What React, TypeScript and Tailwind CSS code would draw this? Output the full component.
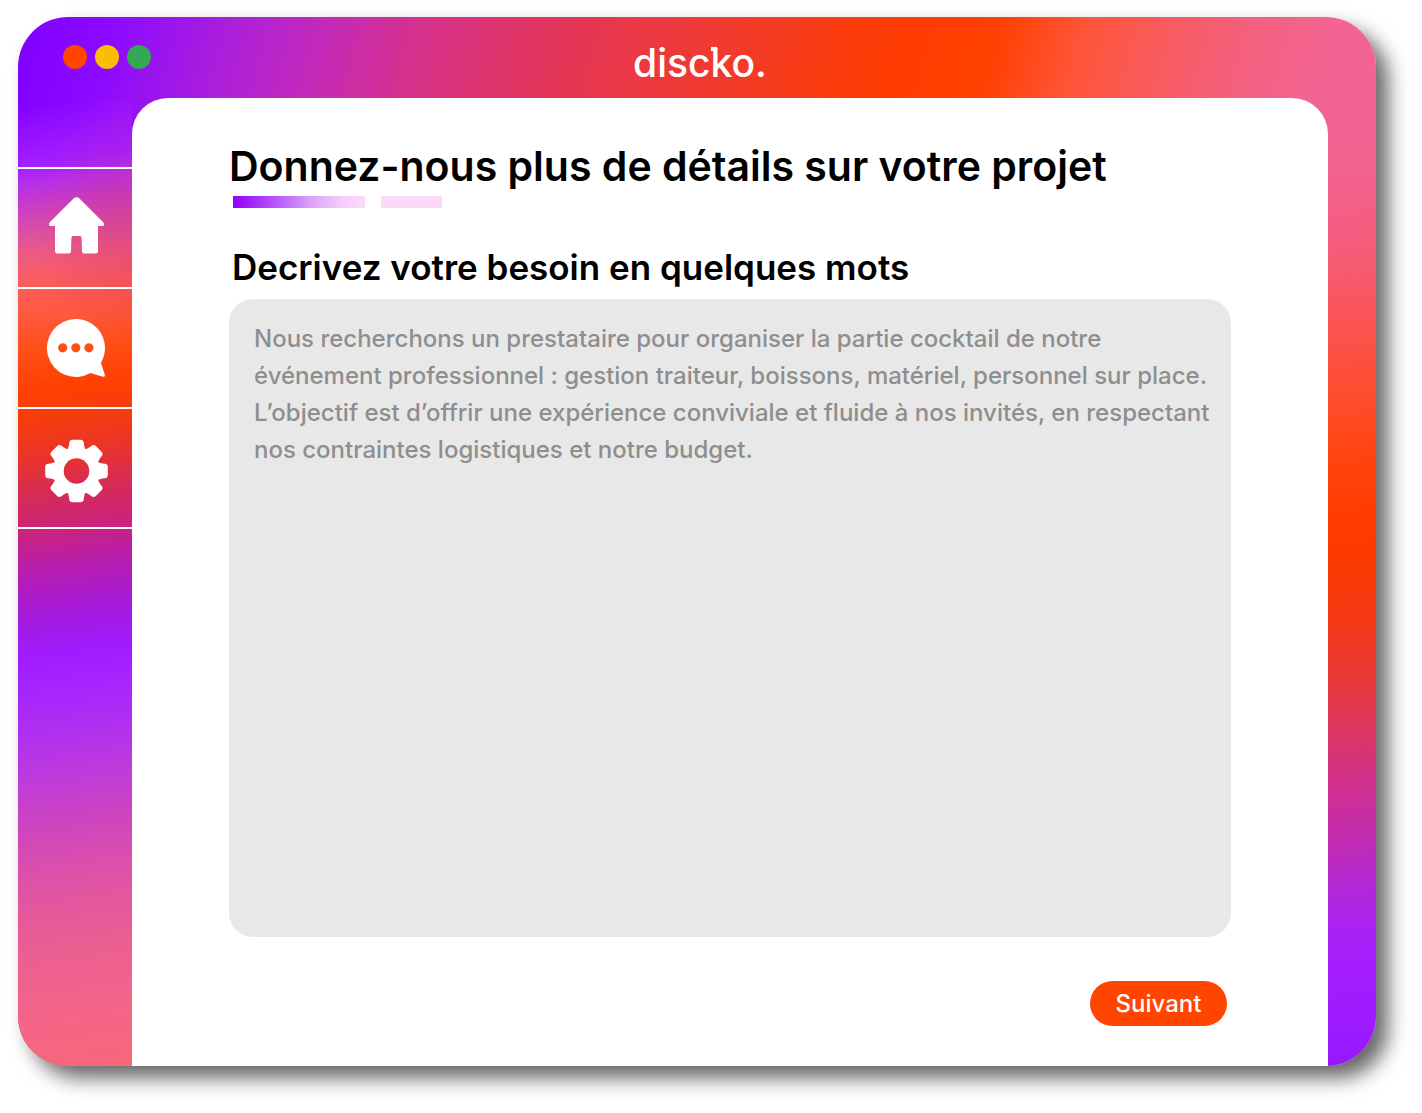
import { useState } from "react";

const DEFAULT_BRIEF =
  "Nous recherchons un prestataire pour organiser la partie cocktail de notre événement professionnel : gestion traiteur, boissons, matériel, personnel sur place. L’objectif est d’offrir une expérience conviviale et fluide à nos invités, en respectant nos contraintes logistiques et notre budget.";

const Logo = () => (
  <svg viewBox="0 0 160 60" className="h-[60px] w-40 justify-self-center" fill="white" role="img" aria-label="discko.">
    <text x="83" y="49" textAnchor="middle" fontFamily="Inter, sans-serif" fontSize="39" fontWeight="500">
      discko.
    </text>
    {/* small flag on top of the k */}
    <rect x="94" y="19" width="6" height="4" />
  </svg>
);

const HomeIcon = () => (
  <svg viewBox="0 0 55 63" className="h-[63px] w-[55px]" fill="currentColor" aria-hidden="true">
    <path d="M24.8 1.2Q27.5-.8 30.2 1.2L54 25Q55 26 55 27.500Q55 29 53 29H49V54Q49 56.500 46.500 56.500H35.500Q33 56.500 33 54L32.600 41Q32.500 39 31 39H24Q22.500 39 22.400 41L22 54Q22 56.500 19.500 56.500H8.500Q6 56.500 6 54V29H2Q0 29 0 27.500Q0 26 1 25Z" />
  </svg>
);

const ChatIcon = () => (
  <svg viewBox="0 0 58 58" className="size-[58px]" fill="currentColor" aria-hidden="true">
    <path
      fillRule="evenodd"
      d="M29 0A29 29 0 0 1 53.900 43.800L57.900 56Q58.200 58.200 56 57.800L43.500 54.100A29 29 0 1 1 29 0ZM15.700 24.200a4.600 4.600 0 1 0 0 9.200a4.600 4.600 0 1 0 0-9.200ZM28.800 24.200a4.600 4.600 0 1 0 0 9.200a4.600 4.600 0 1 0 0-9.200ZM41.900 24.200a4.600 4.600 0 1 0 0 9.200a4.600 4.600 0 1 0 0-9.200Z"
    />
  </svg>
);

const GearIcon = () => (
  <svg viewBox="-32.5 -37 64 69" className="h-[69px] w-16" fill="currentColor" aria-hidden="true">
    <mask id="gear-hole" maskUnits="userSpaceOnUse" x="-32" y="-32" width="64" height="64">
      <rect x="-32" y="-32" width="64" height="64" fill="white" />
      <circle r="12.8" fill="black" />
    </mask>
    <g mask="url(#gear-hole)">
      <circle r="23" />
      {[0, 45, 90, 135, 180, 225, 270, 315].map((angle) => (
        <path
          key={angle}
          transform={`rotate(${angle})`}
          d="M-10-20Q-7.800-23-7.500-26L-7.200-28.500Q-6.900-31.300-4-31.300H4Q6.900-31.300 7.200-28.500L7.500-26Q7.800-23 10-20Z"
        />
      ))}
    </g>
  </svg>
);

const navItems = [
  { label: "Accueil", Icon: HomeIcon },
  { label: "Messages", Icon: ChatIcon },
  { label: "Paramètres", Icon: GearIcon },
];

const App = () => {
  const [brief, setBrief] = useState(DEFAULT_BRIEF);

  return (
    <div className="flex min-h-screen bg-white pt-[17px] pr-[46px] pb-[47px] pl-[18px] font-['Inter',sans-serif]">
      {/* Window frame */}
      <div className="flex flex-1 flex-col overflow-hidden rounded-[50px] shadow-[12px_12px_20px_rgba(0,0,0,0.6)] bg-[linear-gradient(105deg,#8000ff_0%,#8c0aff_6%,#ab1fdb_13%,#c42ab8_19%,#d6318a_25%,#e03560_32%,#e9384a_37%,#f13a2c_44%,#fa3c10_50%,#ff3d00_55%,#ff4000_60%,#ff5436_65%,#fa5a55_69%,#f4607c_75%,#f26494_81%,#f2649c_100%)]">
        <header className="grid h-[81px] grid-cols-3 items-center">
          <div className="flex gap-2 pb-0.5 pl-[45px]">
            <span className="size-6 rounded-full bg-[#ff4500]" />
            <span className="size-6 rounded-full bg-[#fbbc05]" />
            <span className="size-6 rounded-full bg-[#34a853]" />
          </div>
          <Logo />
        </header>

        <div className="flex flex-1">
          {/* Sidebar */}
          <nav className="w-[114px] shrink-0 pt-[69px] text-white bg-[radial-gradient(100px_120px_at_100%_13%,rgba(200,44,130,0.35),transparent),linear-gradient(172deg,transparent_1%,#a41eff_7%,#b830e8_9%,#c83cc8_11%,#dc50a0_14%,#ec5a84_16%,#f85e68_18%,#fc5c54_20%,#ff5838_23%,#ff4f18_26%,#ff4000_30%,#f63c0e_33%,#e8342c_37%,#d82c50_40%,#cc2478_44%,#b81eac_48%,#a41adc_53%,#a01cff_57%,#a424ff_60%,#b030f0_65%,#c03cd8_70%,#cc44c0_74%,#dc50ac_79%,#e4589c_83%,#ec6090_88%,#f46588_94%,#f7687a_100%)]">
            <div className="border-t-2 border-white">
              {navItems.map(({ label, Icon }) => (
                <button
                  key={label}
                  type="button"
                  aria-label={label}
                  className="flex h-[120px] w-full cursor-pointer items-center justify-center border-b-2 border-white pl-0.5"
                >
                  <Icon />
                </button>
              ))}
            </div>
          </nav>

          {/* Project form */}
          <main className="flex flex-1 flex-col rounded-t-[36px] bg-white px-[97px] pt-11 pb-10">
            <h1 className="text-[41px] leading-[48px] font-semibold text-black">
              Donnez-nous plus de détails sur votre projet
            </h1>
            <div className="mt-[6px] ml-1 flex gap-4">
              <span className="h-3 w-[132px] bg-[linear-gradient(90deg,#9000ff,#b650fb_30%,#dca4f8_60%,#f3cdf9_82%,#fadafa)]" />
              <span className="h-3 w-[61px] bg-[#fad9f9]" />
            </div>
            <label htmlFor="brief" className="mt-[39px] ml-[3px] text-[35px] leading-10 font-semibold text-black">
              Decrivez votre besoin en quelques mots
            </label>
            <textarea
              id="brief"
              value={brief}
              onChange={(e) => setBrief(e.target.value)}
              className="mt-3 w-full flex-1 resize-none rounded-3xl bg-[#e8e8e8] py-[21px] pr-4 pl-[25px] text-2xl leading-[37px] font-medium text-[#8e8e8e] outline-none"
            />
            <button
              type="submit"
              className="mt-11 mr-1 h-[45px] w-[137px] cursor-pointer self-end rounded-full bg-[#ff4500] text-2xl font-medium text-white"
            >
              Suivant
            </button>
          </main>

          <div className="w-12 shrink-0 bg-[linear-gradient(175deg,transparent_0%,#f26490_6%,#f35f88_11%,#f55c78_16%,#fa5660_21%,#fc5040_27%,#ff4c28_32%,#ff4410_37%,#ff3d00_43%,#fc3a00_48%,#f43a18_54%,#e83838_60%,#dc3660_65%,#d03090_71%,#c02cb4_77%,#b428d4_81%,#a822f4_86%,#a41eff_90%,#9618ff_100%)]" />
        </div>
      </div>
    </div>
  );
};

export default App;
